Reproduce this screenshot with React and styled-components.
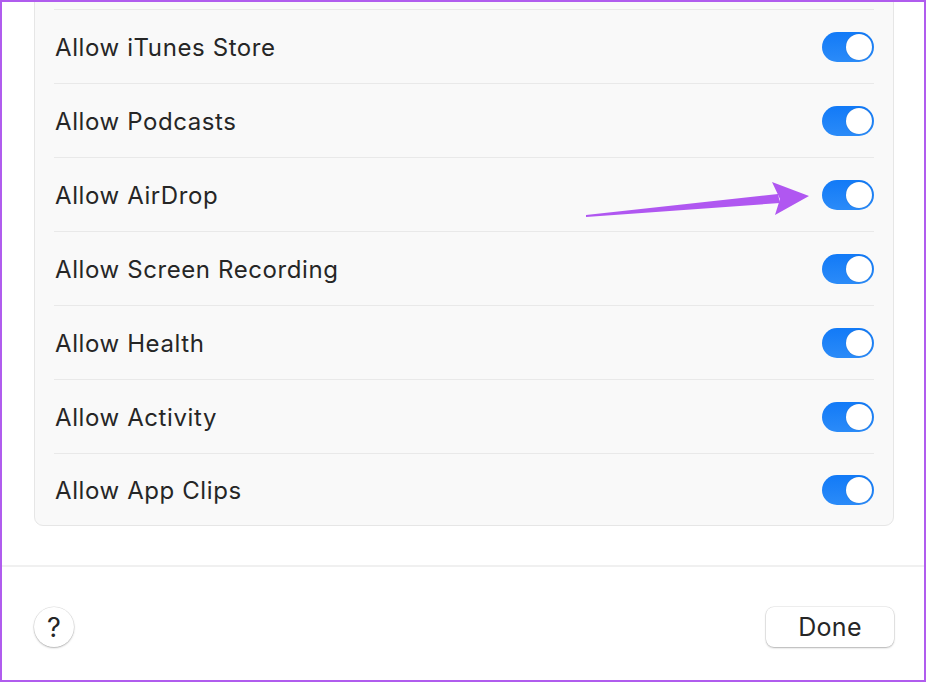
import React from "react"
import styled, {createGlobalStyle} from "styled-components"

const GlobalStyle = createGlobalStyle`
  html, body {
    margin: 0;
    padding: 0;
    background: #ffffff;
  }
  * {
    box-sizing: border-box;
  }
`

// first row is scrolled above the window, only its bottom edge shows
const settings = [
    {label: "", on: true},
    {label: "Allow iTunes Store", on: true},
    {label: "Allow Podcasts", on: true},
    {label: "Allow AirDrop", on: true, marked: true},
    {label: "Allow Screen Recording", on: true},
    {label: "Allow Health", on: true},
    {label: "Allow Activity", on: true},
    {label: "Allow App Clips", on: true},
]

const Arrow = () => (
    <ArrowSvg width="240" height="50" viewBox="0 0 240 50">
        <path d="M0 37 L0 39 L194 25 L192 16 Z" fill="#b057f1"/>
        <path d="M186 4 L223 18 L189 37 L194 21 Z" fill="#b057f1"/>
    </ArrowSvg>
)

const App = () => {
    return (
        <Frame>
            <GlobalStyle/>
            <Content>
                <Card>
                    {settings.map((item, index) => (
                        <Row key={index} first={index === 0} last={index === settings.length - 1}>
                            <Label>{item.label}</Label>
                            {item.marked && <Arrow/>}
                            {index > 0 && (
                                <Toggle on={item.on}>
                                    <Knob/>
                                </Toggle>
                            )}
                        </Row>
                    ))}
                </Card>
            </Content>
            <Footer>
                <HelpButton>?</HelpButton>
                <DoneButton>Done</DoneButton>
            </Footer>
        </Frame>
    )
}

const Frame = styled.div`
  width: 926px;
  height: 682px;
  border: 2px solid #b05cee;
  overflow: hidden;
  display: flex;
  flex-direction: column;
  background: #ffffff;
  font-family: Inter, "Noto Sans", sans-serif;
  color: #262626;
`
const Content = styled.div`
  padding: 0 30px 0 32px;
  height: 565px;
  border-bottom: 2px solid #f0f0f0;
`
const Card = styled.div`
  margin-top: -68px;
  background: #f9f9f9;
  border: 1px solid #e6e6e6;
  border-radius: 9px;
`
const Row = styled.div`
  position: relative;
  margin: 0 19px;
  height: ${p => p.last ? 72 : 74}px;
  border-top: ${p => p.first ? "none" : "1px solid #e9e9e9"};
  padding-top: ${p => p.first ? 1 : 2}px;
  display: flex;
  align-items: center;
  justify-content: space-between;
`
const Label = styled.span`
  font-size: 24px;
  letter-spacing: 0.6px;
  padding-left: 1px;
`
const ArrowSvg = styled.svg`
  position: absolute;
  right: 48px;
  top: 20px;
`
const Toggle = styled.div`
  width: 52px;
  height: 30px;
  margin-top: -2px;
  border-radius: 15px;
  background: linear-gradient(180deg, #127af7 0%, #2b8bf8 100%);
  display: flex;
  align-items: center;
  justify-content: ${p => p.on ? "flex-end" : "flex-start"};
  padding: 2px;
`
const Knob = styled.div`
  width: 26px;
  height: 26px;
  border-radius: 50%;
  background: #ffffff;
  box-shadow: 0 0 1px rgba(0, 0, 0, 0.25);
`
const Footer = styled.div`
  flex: 1;
  display: flex;
  align-items: flex-start;
  justify-content: space-between;
  padding: 40px 30px 0 32px;
`
const HelpButton = styled.div`
  width: 40px;
  height: 40px;
  border-radius: 50%;
  background: #ffffff;
  box-shadow: 0 0 0 0.5px rgba(0, 0, 0, 0.12), 0 1px 2px rgba(0, 0, 0, 0.25);
  display: flex;
  align-items: center;
  justify-content: center;
  font-size: 27px;
  color: #262626;
`
const DoneButton = styled.div`
  width: 128px;
  height: 40px;
  border-radius: 8px;
  background: #ffffff;
  box-shadow: 0 0 0 0.5px rgba(0, 0, 0, 0.12), 0 1px 2px rgba(0, 0, 0, 0.25);
  display: flex;
  align-items: center;
  justify-content: center;
  font-size: 25px;
  letter-spacing: 0.3px;
  color: #262626;
`

export default App
